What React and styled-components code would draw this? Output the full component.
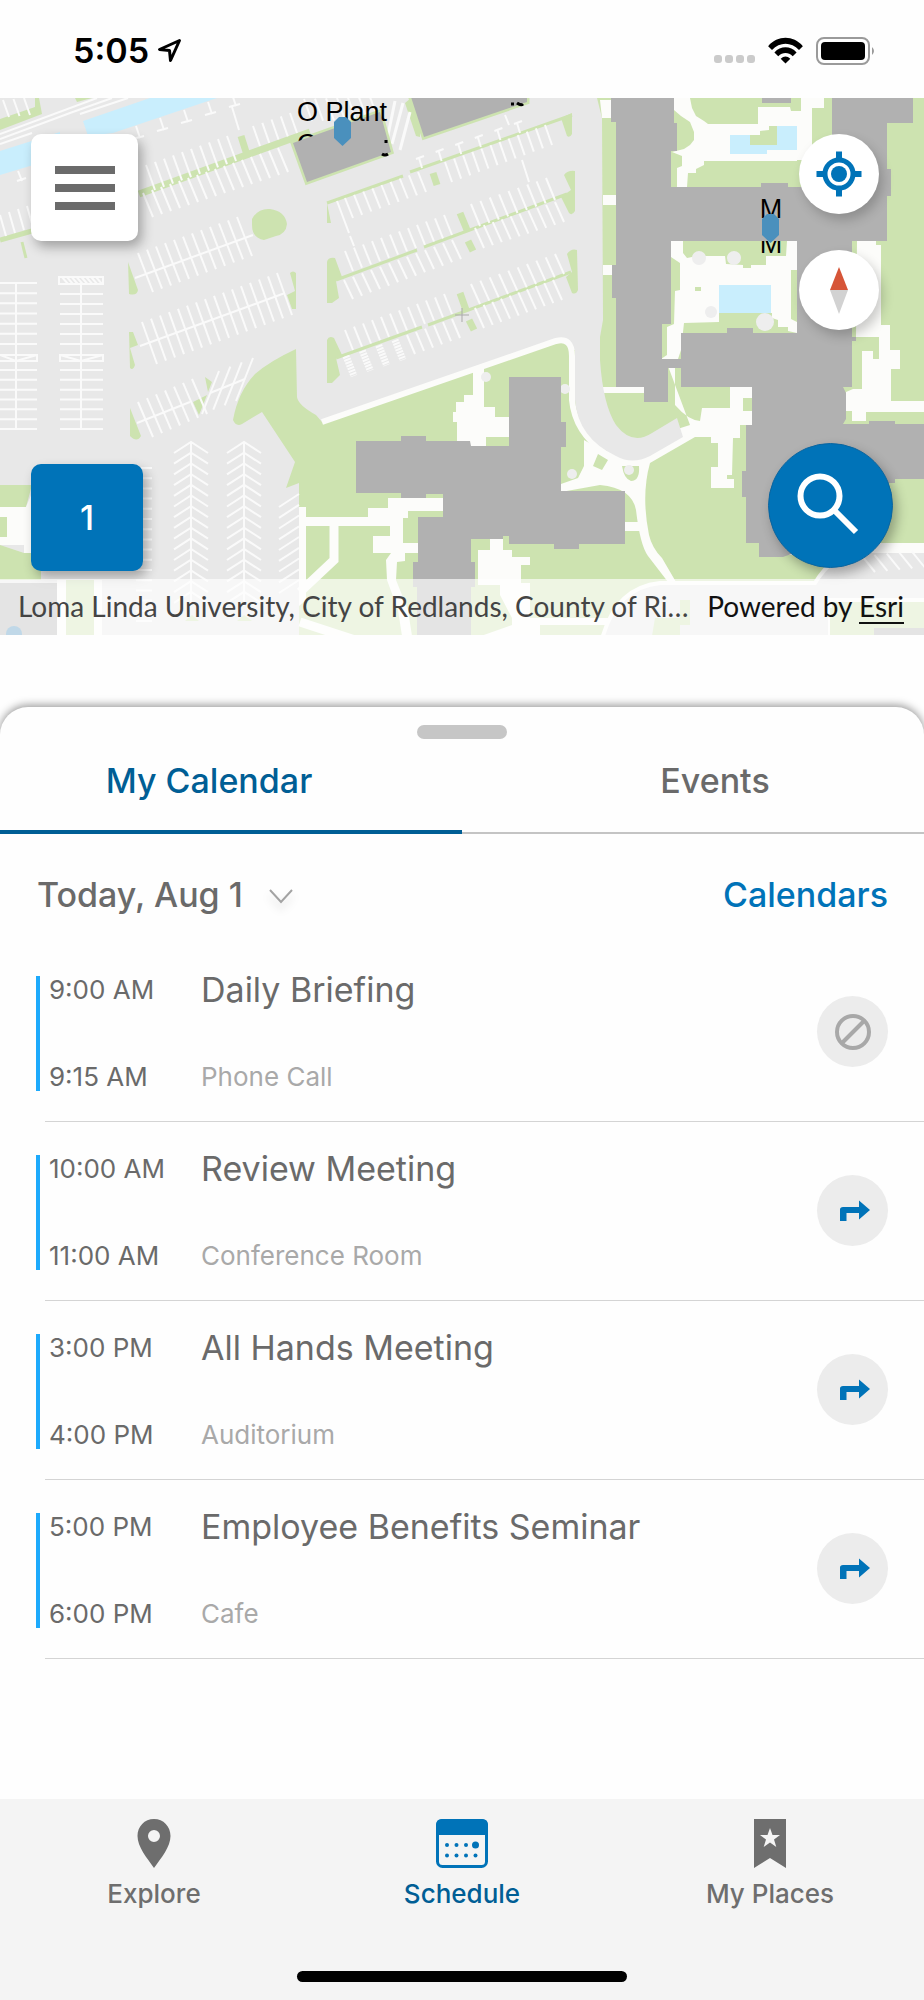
import { useState } from "react";
import styled, { createGlobalStyle } from "styled-components";

const events = [
  { start: "9:00 AM", end: "9:15 AM", title: "Daily Briefing", place: "Phone Call", route: false },
  { start: "10:00 AM", end: "11:00 AM", title: "Review Meeting", place: "Conference Room", route: true },
  { start: "3:00 PM", end: "4:00 PM", title: "All Hands Meeting", place: "Auditorium", route: true },
  { start: "5:00 PM", end: "6:00 PM", title: "Employee Benefits Seminar", place: "Cafe", route: true },
];

// n parallel parking lines, the first at x1,y1 and the last at x2,y2
function stalls(x1, y1, x2, y2, n, dx, dy) {
  let d = "";
  for (let i = 0; i < n; i++) {
    const t = n > 1 ? i / (n - 1) : 0;
    const x = (x1 + (x2 - x1) * t).toFixed(1);
    const y = (y1 + (y2 - y1) * t).toFixed(1);
    d += `M${x},${y}l${dx},${dy}`;
  }
  return d;
}

function chevrons(x) {
  let d = `M${x},442V606`;
  for (let i = 0; i < 15; i++) {
    d += `M${x - 17},${453 + i * 10.7}l17,-11l17,11`;
  }
  return d;
}

export default function App() {
  const [tab, setTab] = useState("calendar");

  return (
    <>
      <GlobalStyle />
      <Screen>
        <StatusBar>
          <Clock>
            5:05
            <svg width="25" height="25" viewBox="0 0 25 25" fill="none" stroke="#000" strokeWidth="3" strokeLinejoin="round">
              <path d="M22.500 2.500 2.500 11.500 12.500 12.500 13.500 22.500z" />
            </svg>
          </Clock>
          <StatusIcons>
            <svg width="41" height="8" viewBox="0 0 41 8" fill="#cbcbcb">
              <rect x="0" width="8" height="8" rx="3" />
              <rect x="11" width="8" height="8" rx="3" />
              <rect x="22" width="8" height="8" rx="3" />
              <rect x="33" width="8" height="8" rx="3" />
            </svg>
            <svg width="37" height="27" viewBox="0 0 38 28">
              <path d="M1 9.500C11-2 27-2 37 9.500L33 13.500C25 5 13 5 5 13.500z" />
              <path d="M7.500 16C14 9 24 9 30.500 16L26.500 20C22 15.500 16 15.500 11.500 20z" />
              <path d="M14 22.500Q19 18 24 22.500L19 27.500z" />
            </svg>
            <svg width="60" height="28" viewBox="0 0 60 28">
              <rect x="1" y="1" width="52" height="26" rx="7" fill="none" stroke="#9a9a9a" strokeWidth="2" />
              <rect x="5" y="5" width="44" height="18" rx="4" />
              <path d="M56 10q4 4 0 8z" fill="#9a9a9a" />
            </svg>
          </StatusIcons>
        </StatusBar>

        <MapPanel>
          <CampusMap />
          <MapControls>
            <ControlColumn>
              <MenuButton aria-label="Menu">
                <span /><span /><span />
              </MenuButton>
              <FloorButton aria-label="Floor 1">1</FloorButton>
            </ControlColumn>
            <ControlColumn $end>
              <RoundStack>
                <RoundButton aria-label="My location">
                  <svg width="46" height="46" viewBox="0 0 46 46" fill="none" stroke="#0073b8">
                    <circle cx="23" cy="23" r="14" strokeWidth="5" />
                    <circle cx="23" cy="23" r="8" fill="#0073b8" stroke="none" />
                    <path d="M23 0.500V9M23 37V45.500M0.500 23H9M37 23H45.500" strokeWidth="6" />
                  </svg>
                </RoundButton>
                <RoundButton aria-label="Compass">
                  <svg width="18" height="47" viewBox="0 0 18 47">
                    <path d="M9 0 18 23H0z" fill="#d65538" />
                    <path d="M9 47 18 23H0z" fill="#d2d2d2" />
                  </svg>
                </RoundButton>
              </RoundStack>
              <SearchButton aria-label="Search">
                <svg width="62" height="62" viewBox="0 0 62 62" fill="none" stroke="#fff" strokeWidth="6">
                  <circle cx="23" cy="23" r="19.500" />
                  <path d="M37.500 37.500 59 59" />
                </svg>
              </SearchButton>
            </ControlColumn>
          </MapControls>
          <Attribution>
            <span>Loma Linda University, City of Redlands, County of Ri…</span>
            <Powered>Powered by <a href="#esri">Esri</a></Powered>
          </Attribution>
        </MapPanel>

        <Sheet>
          <Handle />
          <Tabs role="tablist">
            <Tab role="tab" aria-selected={tab === "calendar"} $active={tab === "calendar"} onClick={() => setTab("calendar")}>
              My Calendar
            </Tab>
            <Tab role="tab" aria-selected={tab === "events"} $active={tab === "events"} onClick={() => setTab("events")}>
              Events
            </Tab>
          </Tabs>
          <DayBar>
            <DayButton>
              Today, Aug 1
              <svg width="24" height="15" viewBox="0 0 24 15" fill="none" stroke="#a3a3a3" strokeWidth="2">
                <path d="M1 1 12 13 23 1" />
              </svg>
            </DayButton>
            <CalendarsLink href="#calendars">Calendars</CalendarsLink>
          </DayBar>
          <EventList>
            {events.map((event) => (
              <EventRow key={event.title}>
                <Times>
                  <span>{event.start}</span>
                  <span>{event.end}</span>
                </Times>
                <Details>
                  <h3>{event.title}</h3>
                  <p>{event.place}</p>
                </Details>
                <RouteButton disabled={!event.route} aria-label={event.route ? "Directions" : "No directions"}>
                  {event.route ? <TurnIcon /> : <NoRouteIcon />}
                </RouteButton>
              </EventRow>
            ))}
          </EventList>
        </Sheet>

        <BottomBar>
          <NavItems>
            <NavItem href="#explore">
              <svg width="34" height="49" viewBox="0 0 34 49">
                <path fillRule="evenodd" d="M17 0C26.500 0 33.500 7.500 33.500 17 33.500 28 24 39 17 49 10 39 .5 28 .5 17 .5 7.500 7.500 0 17 0zM17 11a6 6 0 1 0 0 12a6 6 0 0 0 0-12z" fill="currentColor" />
              </svg>
              Explore
            </NavItem>
            <NavItem href="#schedule" $active>
              <svg width="52" height="49" viewBox="0 0 52 49" fill="#0073b8">
                <rect x="1.500" y="1.500" width="49" height="46" rx="5" fill="none" stroke="#0073b8" strokeWidth="3" />
                <path d="M0 16V6Q0 0 6 0H46Q52 0 52 6V16z" />
                <circle cx="11" cy="26" r="2" />
                <circle cx="20.500" cy="26" r="2" />
                <circle cx="30" cy="26" r="2" />
                <circle cx="39.500" cy="26" r="3.500" />
                <circle cx="11" cy="36.500" r="2" />
                <circle cx="20.500" cy="36.500" r="2" />
                <circle cx="30" cy="36.500" r="2" />
                <circle cx="39.500" cy="36.500" r="2" />
              </svg>
              Schedule
            </NavItem>
            <NavItem href="#places">
              <svg width="32" height="49" viewBox="0 0 32 49">
                <path d="M0 0H32V49L16 39 0 49z" fill="currentColor" />
                <path d="M16 9 18.500 16H26L20 20.500 22.300 28 16 23.500 9.700 28 12 20.500 6 16H13.500z" fill="#f4f4f4" />
              </svg>
              My Places
            </NavItem>
          </NavItems>
          <HomeIndicator />
        </BottomBar>
      </Screen>
    </>
  );
}

function TurnIcon() {
  return (
    <svg width="34" height="22" viewBox="-4 0 34 22" fill="#0073b8">
      <path d="M0 21V9.500Q0 7 3 7H19V0.500L30 10 19 19.500V13H6.500V21z" />
    </svg>
  );
}

function NoRouteIcon() {
  return (
    <svg width="36" height="36" viewBox="0 0 36 36" fill="none" stroke="#a8a8a8" strokeWidth="4">
      <circle cx="18" cy="18" r="16" />
      <path d="M7 29 29 7" />
    </svg>
  );
}

function Marker({ x, y }) {
  return <path d={`M${x} ${y + 5}l5 -5h7l5 5v16l-8.500 8l-8.500 -8z`} fill="#4a90bd" />;
}

function CampusMap() {
  return (
    <MapSvg viewBox="0 98 924 537" preserveAspectRatio="xMidYMid slice" role="img" aria-label="Campus map">
      <rect x="0" y="98" width="924" height="538" fill="#e8e8e8" />

      {/* channel */}
      <path d="M83 121 150 98H217L113 133 88 136zM0 151 60 132V157L0 175z" fill="#c9eefd" />

      {/* grass */}
      <g fill="#cde3b0">
        <path d="M0 119 35 107V98H39L42 114 0 130z" />
        <path d="M75 98H92L77 102z" />
        <path d="M252 219Q258 208 270 209 285 211 287 224 286 234 276 236L264 240Q252 238 252 225z" />
        <path d="M128 262 138 290Q137 296 129 294z" />
        <path d="M290 273Q293 270 296 273V309H292L287 295 295 291z" />
        <path d="M129 332H133L138 345 130 348 135 365Q133 371 130 368z" />
        <path d="M130 408 141 436Q137 443 130 436zM193 402 207 395 199 415zM205 377 212 382 208 392z" />
        <path d="M296 349Q270 361 255 374 238 392 233 420 236 427 242 424L262 412 295 462 286 488 299 483V636H924V98H597L602 118 603 320 600 337V350H573Q572 341 557 343L322 422 316 415Q298 405 297 397z" />
        <path d="M0 485H32L26 507H0zM0 545 24 553H41V580H0z" />
        <path d="M327 203 331 223H327zM561 118 572 113V134Q570 138 567 136z" />
        <path d="M327 262Q328 257 335 258L342 277 336 281 339 298 332 303H327z" />
        <path d="M564 175Q568 170 575 171V211Q572 216 569 213L561 197 571 190z" />
        <path d="M327 340Q329 335 334 338L342 355 336 358 340 375 332 383H327z" />
        <path d="M567 254Q571 248 577 250L578 290Q576 295 572 293L566 277 572 272z" />
        <path d="M405 103 411 98H420V137L416 136zM185 621 192 615 199 621zM237 621 244 615 252 621z" />
      </g>
      <g fill="none" stroke="#cde3b0">
        <path d="M139 194 310 132M241 136 247 155" strokeWidth="7" />
        <path d="M0 240 32 231" strokeWidth="5" />
        <path d="M22 242 26 258" strokeWidth="3" />
        <path d="M327 203 403 176M410 172 572 115M336 280 417 250M424 247 567 194M336 358 422 327M428 325 571 272" strokeWidth="3" />
        <path d="M433 173 437 185M460 213 467 230M468 241 473 251M460 293 466 310M469 320 474 330" strokeWidth="7" />
      </g>

      {/* parking */}
      <g fill="none" stroke="#fafafa" strokeWidth="2">
        <path d="M0 134 97 98M0 139 70 113Q95 104 112 98M0 144 32 133M80 114 128 98" />
        <path d={stalls(3, 100, 24, 98, 3, 6, 17)} />
        <path d={stalls(146, 165, 227, 136, 10, 9, 25)} />
        <path d={stalls(253, 126, 290, 113, 5, 7, 20)} />
        <path d={stalls(143, 193, 278, 148, 16, 10, 24)} />
        <path d={stalls(138, 253, 237, 217, 12, 15, 39)} />
        <path d={stalls(142, 322, 277, 273, 16, 15, 42)} />
        <path d={stalls(138, 402, 192, 379, 7, 15, 35)} />
        <path d={stalls(219, 371, 253, 358, 4, -17, 43)} />
        <path d={stalls(0, 215, 27, 206, 4, 6, 21)} />
        <path d="M135 278 253 235M140 346 285 293M137 423 190 402M210 393 245 379" />
        <path d={stalls(0, 283, 0, 344, 7, 37, 0)} />
        <path d={stalls(0, 370, 0, 429, 7, 37, 0)} />
        <path d={stalls(60, 294, 60, 344, 6, 43, 0)} />
        <path d={stalls(60, 370, 60, 429, 7, 43, 0)} />
        <path d="M16 283V429M81 283V429M0 355H37V361H0M60 355H103V361H60zM0 355 16 361 37 355M60 355 81 361 103 355" />
        <path d="M59 277H103V284H59z" />
        <path d={stalls(62, 277, 96, 277, 8, 6, 7)} />
        <path d={stalls(136, 126, 232, 94, 5, 4, 12)} />
        <path d={stalls(133, 139, 229, 107, 5, 11, -3)} />
        <path d="M18 171 22 181M17 181 26 178M232 107 239 130" />
        <path d={chevrons(191)} />
        <path d={chevrons(244)} />
        <path d={stalls(279, 507, 279, 593, 9, 20, -13)} />
        <path d={stalls(136, 468, 136, 621, 16, 16, 0)} />
        <path d={stalls(345, 198, 418, 172, 9, 8, 20)} />
        <path d={stalls(445, 162, 545, 125, 12, 7, 20)} />
        <path d={stalls(345, 251, 444, 215, 12, 8, 20)} />
        <path d={stalls(471, 204, 546, 178, 9, 9, 22)} />
        <path d={stalls(344, 280, 452, 240, 13, 9, 19)} />
        <path d={stalls(475, 228, 555, 202, 10, 9, 20)} />
        <path d={stalls(345, 330, 444, 294, 12, 8, 20)} />
        <path d={stalls(471, 284, 555, 254, 10, 9, 20)} />
        <path d={stalls(407, 335, 452, 319, 6, 8, 19)} />
        <path d={stalls(475, 308, 553, 280, 10, 9, 20)} />
        <path d={stalls(304, 99, 370, 97, 7, 8, 22)} />
        <path d={stalls(419, 158, 517, 123, 6, 3, 10)} />
        <path d={stalls(416, 159, 514, 124, 6, 8, -3)} />
        <path d="M337 201 349 233M350 236 354 246M522 160 529 182M505 115 509 125" />
        <path d="M395 101 387 140M403 103 392 144M410 112 400 150" strokeWidth="3" />
        <path d={stalls(346, 356, 395, 340, 4, 8, 20)} strokeWidth="7" strokeDasharray="2 1" />
      </g>

      {/* walkways */}
      <g fill="#fcfcfa">
        <path d="M600 100H611V118H602zM603 195H616V205H603zM603 265H616V275H603zM602 387H644V393H602z" />
        <path d="M674 98H690L692 108 696 116 704 121 708 124H758V107H790L791 111H801V98H824V108H812V160H797V161H704V165L696 169V173H688L687 187H677V168L682 166V156L672 152 684 149 690 145 694 140V132L690 122 681 116 674 110z" />
        <path d="M671 241H683V253L687 258 697 256H725L726 264 743 265V268H751V265H766V256H786L787 241H797V270H791V319L797 322V333L788 331V327H778V320L772 318V313H719V322L684 323 681 350 678 359H661L667 355V327L674 324 675 291 680 290V263L671 257z" />
        <path d="M857 241H876V245H881V325H890V350H900V369H891V401H924V412H866V421H852V411H846V392L853 389H862V351H873V359H879V337H856z" />
        <path d="M668 366H675V405Q688 420 700 421L702 408H730V387H752V398H743V411H752V425H740V438H733L732 475H727V479H734V488H711V467H718V443H711V437H695L650 463Q641 495 649 535 652 548 662 558L676 582H668L648 556Q640 545 636 510 632 488 600 485L561 492V484L578 478 584 466V440L605 452 690 425z" />
        <path d="M625 522H642V531H625z" />
        <path d="M473 370 484 366V407H495V417H509V437H486V446H471L457 441V422H453V412H456V402H464V395H473z" />
        <path d="M299 507H306V517H368V508H388V498H443V511H408V518H403V543H418V553H405V561L397 562 396 580 408 610 412 636H402L398 610 387 580 386 560 391 553H373V536H390V526H306V600L299 606z" />
        <path d="M478 550H490V539H503V550H512V557H530V565H521V583H530V618H610V625H540V636H481L512 625V618L500 595V585H478z" />
        <path d="M0 507H26L31 495V553H24V545H0zM57 580H102V636H57zM760 543H924V555H760z" />
      </g>
      <path d="M0 517H7V537H0zM66 580H94V636H66zM695 287H701V291H695zM743 398H752V411H743z" fill="#cde3b0" />
      <path d="M334 526V560L300 592M300 622 355 640" fill="none" stroke="#fcfcfa" strokeWidth="9" />
      <path d="M322 422 556 341Q572 337 572 356V400Q575 432 605 453 633 472 652 457L690 434" fill="none" stroke="#fcfcfa" strokeWidth="6" />
      <path d="M575 346H600V360Q603 405 616 425 632 446 652 433L677 418 683 437 650 456Q632 465 616 456 578 438 575 400z" fill="#e8e8e8" />
      <path d="M598 454 608 460 602 470 593 466zM622 466H639Q640 481 631 481 624 479 622 466z" fill="#cde3b0" />
      <path d="M600 648Q612 588 660 583H815Q832 555 858 551H928V600H830V640z" fill="#e8e8e8" stroke="#fcfcfa" strokeWidth="4" />
      <path d={stalls(862, 556, 924, 550, 6, 13, 16)} stroke="#fafafa" strokeWidth="2" />
      <path d="M655 618H680V636H652zM680 600H690V625H680zM830 608H924V636H830z" fill="#cde3b0" />

      <g fill="#eee">
        <circle cx="699" cy="258" r="7" /><circle cx="734" cy="258" r="7" /><circle cx="711" cy="312" r="6" />
        <circle cx="765" cy="322" r="9" /><circle cx="565" cy="389" r="5" /><circle cx="572" cy="474" r="5" />
        <circle cx="486" cy="377" r="5" /><circle cx="629" cy="470" r="5" />
      </g>
      <path d="M730 135H750V145H777V126H797V150H767V154H730zM719 285H771V313H719z" fill="#c9eefd" />
      <path d="M760 131 769 130V126H777V145H750V135H760z" fill="#cde3b0" />

      {/* buildings, over the second line of each label */}
      <g fill="#b1b1b1">
        <path d="M293 143 380 112 391 152 307 182zM411 98H527V102L424 137z" stroke="#cde3b0" strokeWidth="5" />
        <g fontFamily="Liberation Sans, sans-serif" fontSize="27" fill="#000">
          <text x="297" y="153">C</text>
          <text x="771" y="253" textAnchor="middle">M</text>
        </g>
        <path d="M293 143 380 112 391 152 307 182zM411 97H527V102L424 137z" />
        <path fillRule="evenodd" d="M611 98H674V123H677V151H671V187H761V183H788V187H832V98H913V123H887V169H891V196H887V241H852V337H856V341H852V387H843L846 393V419L843 424H869V421H895V424H924V479H895V483H885V520L783 557H759V543H746V497H742V471H746V425H752V387H681V368H668V402H644V387H616V298H612V265H616V122H611zM671 241V324H662V359H681V333H727V328H753V333H797V241z" />
        <path d="M356 441H401V436H426V441H470L471 446H509V377H561V422H566V447H561V491H625V544H579V549H554V544H509V536H503V539H471V562H475V587H471V636H417V587H413V562H418V517H443V494H426V498H401V493H356z" />
        <path d="M0 583H57V636H0zM762 98H791V103H762zM874 628H924V636H874z" />
      </g>

      <g fontFamily="Liberation Sans, sans-serif" fontSize="27">
        <text x="297" y="121">O Plant</text>
        <text x="771" y="218" textAnchor="middle">M</text>
      </g>
      <path d="M382 154q3 2 6 0M386 140v3M511 104h3M517 103q4 3 6 1" fill="none" stroke="#000" strokeWidth="3" />
      <Marker x={334} y={117} />
      <Marker x={762} y={214} />
      <circle cx="14" cy="634" r="8" fill="#4a90bd" />
      <path d="M455 315H469M462 308V322" stroke="#a9a9a9" strokeWidth="1" />
    </MapSvg>
  );
}

const GlobalStyle = createGlobalStyle`
  * {
    box-sizing: border-box;
  }

  body {
    margin: 0;
    background: #fff;
    font-family: Inter, "Liberation Sans", sans-serif;
    color: #6a6a6a;
  }

  button {
    font: inherit;
    color: inherit;
    border: none;
    padding: 0;
    background: none;
  }

  svg {
    flex-shrink: 0;
  }
`;

const Screen = styled.div`
  min-height: 100vh;
  display: flex;
  flex-direction: column;
  background: #fefefe;
`;

const StatusBar = styled.header`
  height: 98px;
  padding: 3px 48px 0 73px;
  display: flex;
  align-items: center;
  justify-content: space-between;
`;

const Clock = styled.div`
  display: flex;
  align-items: center;
  gap: 8px;
  font-size: 34px;
  font-weight: 600;
  color: #000;
`;

const StatusIcons = styled.div`
  display: flex;
  align-items: center;
  gap: 12px;

  svg:first-child {
    margin-top: 16px;
  }
`;

const MapPanel = styled.section`
  position: relative;
  height: 537px;
  overflow: hidden;
`;

const MapSvg = styled.svg`
  display: block;
  width: 100%;
  height: 100%;
`;

const MapControls = styled.div`
  position: absolute;
  inset: 36px 31px 64px 31px;
  display: flex;
  justify-content: space-between;
`;

const ControlColumn = styled.div`
  display: flex;
  flex-direction: column;
  justify-content: space-between;
  align-items: ${({ $end }) => ($end ? "flex-end" : "flex-start")};
`;

const MenuButton = styled.button`
  width: 107px;
  height: 107px;
  display: flex;
  flex-direction: column;
  align-items: center;
  justify-content: center;
  gap: 10px;
  border-radius: 10px;
  background: #fff;
  box-shadow: 4px 6px 12px rgba(0, 0, 0, 0.3);

  span {
    width: 60px;
    height: 8px;
    background: #6b6b6b;
  }
`;

const FloorButton = styled.button`
  width: 112px;
  height: 107px;
  border-radius: 10px;
  background: #0073b8;
  color: #fff;
  font-size: 34px;
  font-weight: 500;
  box-shadow: 4px 6px 12px rgba(0, 0, 0, 0.3);
`;

const RoundStack = styled.div`
  display: flex;
  flex-direction: column;
  gap: 36px;
  margin-right: 14px;
`;

const RoundButton = styled.button`
  width: 80px;
  height: 80px;
  display: flex;
  align-items: center;
  justify-content: center;
  border-radius: 50%;
  background: #fff;
  box-shadow: 4px 6px 12px rgba(0, 0, 0, 0.2);
`;

const SearchButton = styled.button`
  width: 125px;
  height: 125px;
  margin-bottom: 3px;
  padding: 0 5px 3px 0;
  display: flex;
  align-items: center;
  justify-content: center;
  border: 1px solid #0a65a0;
  border-radius: 50%;
  background: #0073b8;
  box-shadow: 4px 6px 12px rgba(0, 0, 0, 0.3);
`;

const Attribution = styled.div`
  position: absolute;
  inset: auto 0 0 0;
  height: 56px;
  padding: 0 20px 3px 18px;
  display: flex;
  align-items: center;
  justify-content: space-between;
  background: rgba(255, 255, 255, 0.65);
  font-family: Lato, sans-serif;
  font-size: 28px;
  color: #444;
  white-space: nowrap;
`;

const Powered = styled.span`
  color: #111;

  a {
    color: inherit;
    text-underline-offset: 5px;
    text-decoration-thickness: 2px;
  }
`;

const Sheet = styled.main`
  flex: 1;
  margin-top: 72px;
  border-radius: 28px 28px 0 0;
  background: #fefefe;
  box-shadow: 0 -2px 8px rgba(0, 0, 0, 0.4);
`;

const Handle = styled.div`
  width: 90px;
  height: 14px;
  margin: 0 auto;
  position: relative;
  top: 18px;
  border-radius: 7px;
  background: #c6c6c6;
`;

const Tabs = styled.div`
  display: flex;
  margin-top: 14px;
`;

const Tab = styled.button`
  flex: 1;
  height: 99px;
  padding-bottom: 8px;
  font-size: 34px;
  font-weight: 500;
  color: ${({ $active }) => ($active ? "#005e95" : "#6a6a6a")};
  box-shadow: inset 0 ${({ $active }) => ($active ? "-4px #005e95" : "-2px #c4c4c4")};

  &:first-child {
    padding-right: 44px;
  }

  &:last-child {
    padding-left: 44px;
  }
`;

const DayBar = styled.div`
  height: 109px;
  padding: 12px 36px 0 37px;
  display: flex;
  align-items: center;
  justify-content: space-between;
  font-size: 34px;
  font-weight: 500;
`;

const DayButton = styled.button`
  display: flex;
  align-items: center;
  gap: 26px;

  svg {
    margin-top: 4px;
    filter: drop-shadow(0 6px 4px rgba(0, 0, 0, 0.15));
  }
`;

const CalendarsLink = styled.a`
  color: #0073b8;
  text-decoration: none;
`;

const EventList = styled.ul`
  margin: 0;
  padding: 0 0 0 45px;
  list-style: none;
`;

const EventRow = styled.li`
  height: 179px;
  padding: 33px 36px 30px 0;
  display: flex;
  align-items: center;
  border-bottom: 1px solid #d4d4d4;
`;

const Times = styled.div`
  width: 165px;
  height: 115px;
  margin-left: -9px;
  padding-left: 9px;
  display: flex;
  flex-direction: column;
  justify-content: space-between;
  border-left: 4px solid #1daafc;
  font-size: 26px;
  line-height: 28px;
`;

const Details = styled.div`
  flex: 1;
  height: 115px;
  display: flex;
  flex-direction: column;
  justify-content: space-between;

  h3 {
    margin: 0;
    font-size: 34px;
    font-weight: 400;
    line-height: 28px;
  }

  p {
    margin: 0;
    font-size: 26px;
    line-height: 28px;
    color: #a9a9a9;
  }
`;

const RouteButton = styled.button`
  width: 71px;
  height: 71px;
  margin-bottom: 4px;
  display: flex;
  align-items: center;
  justify-content: center;
  border-radius: 50%;
  background: #ececec;
`;

const BottomBar = styled.footer`
  height: 201px;
  padding: 20px 0 18px;
  display: flex;
  flex-direction: column;
  align-items: center;
  justify-content: space-between;
  background: #f4f4f4;
`;

const NavItems = styled.nav`
  width: 100%;
  display: flex;
`;

const NavItem = styled.a`
  flex: 1;
  display: flex;
  flex-direction: column;
  align-items: center;
  gap: 9px;
  font-size: 26px;
  font-weight: 500;
  line-height: 34px;
  color: ${({ $active }) => ($active ? "#005e95" : "#6e6e6e")};
  text-decoration: none;
`;

const HomeIndicator = styled.div`
  width: 330px;
  height: 11px;
  border-radius: 6px;
  background: #000;
`;
